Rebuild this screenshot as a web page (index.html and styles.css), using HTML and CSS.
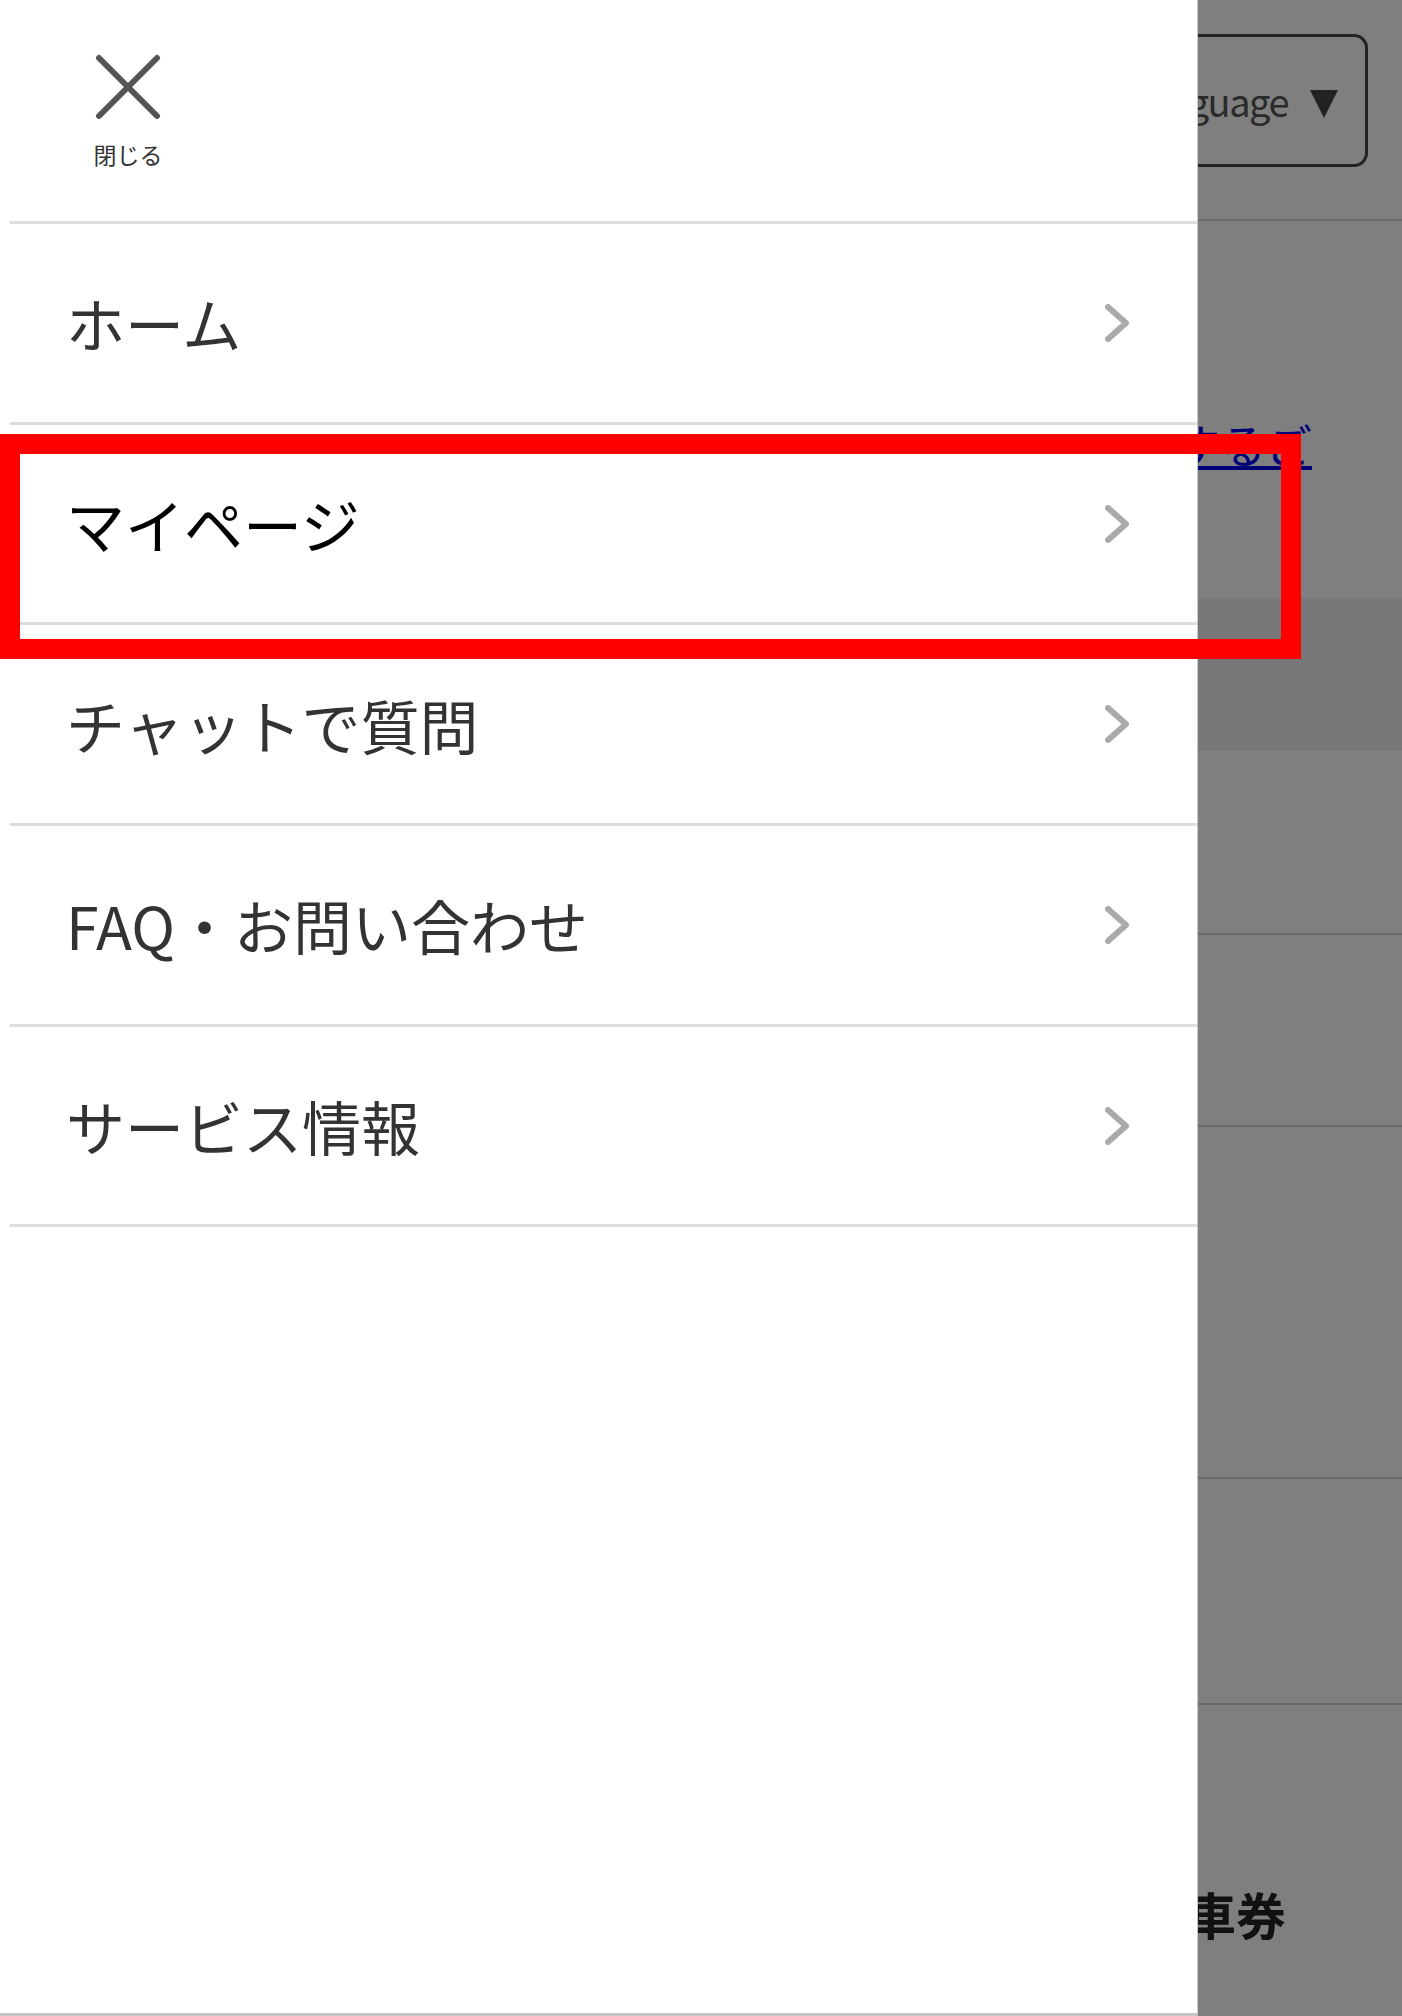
FILE: index.html
```html
<!DOCTYPE html>
<html lang="ja">
<head>
    <meta charset="UTF-8">
    <meta name="viewport" content="width=device-width, initial-scale=1.0">
    <title>メニュー</title>
    <link rel="stylesheet" href="styles.css">
</head>
<body>
    <div class="page">
        <header class="page-header">
            <div class="lang-select">
                <span class="lang-label">Language</span>
                <span class="lang-arrow"></span>
            </div>
        </header>
        <p class="notice"><a href="#">サービスのご利用方法はこちらをご確認するご</a></p>
        <div class="band"></div>
        <div class="block block-a"></div>
        <div class="block block-b"></div>
        <div class="block block-c"></div>
        <div class="block block-d"></div>
        <p class="ticket">乗車券</p>
    </div>

    <div class="overlay"></div>

    <nav class="drawer">
        <div class="drawer-head">
            <button class="close-btn" type="button">
                <svg width="66" height="66" viewBox="0 0 66 66">
                    <path d="M4 4 L62 62 M62 4 L4 62" stroke="#555" stroke-width="6" stroke-linecap="round" fill="none"/>
                </svg>
                <span class="close-label">閉じる</span>
            </button>
        </div>
        <ul class="menu">
            <li class="menu-item"><span>ホーム</span><svg class="chev" width="24" height="38" viewBox="0 0 24 38"><polyline points="3,3 21,19 3,35"/></svg></li>
            <li class="menu-item is-current"><span>マイページ</span><svg class="chev" width="24" height="38" viewBox="0 0 24 38"><polyline points="3,3 21,19 3,35"/></svg></li>
            <li class="menu-item"><span>チャットで質問</span><svg class="chev" width="24" height="38" viewBox="0 0 24 38"><polyline points="3,3 21,19 3,35"/></svg></li>
            <li class="menu-item"><span>FAQ・お問い合わせ</span><svg class="chev" width="24" height="38" viewBox="0 0 24 38"><polyline points="3,3 21,19 3,35"/></svg></li>
            <li class="menu-item"><span>サービス情報</span><svg class="chev" width="24" height="38" viewBox="0 0 24 38"><polyline points="3,3 21,19 3,35"/></svg></li>
        </ul>
    </nav>

    <div class="highlight"></div>
</body>
</html>
```

FILE: styles.css
```css
* {
    box-sizing: border-box;
}
body {
    margin: 0;
    font-family: 'Noto Sans CJK JP', 'Noto Sans', sans-serif;
    background: #fff;
    width: 1402px;
    height: 2016px;
    overflow: hidden;
    position: relative;
}

/* page behind the drawer */
.page {
    width: 1402px;
}
.page-header {
    height: 221px;
    border-bottom: 2px solid #d4d4d4;
    display: flex;
    justify-content: flex-end;
    padding: 34px 34px 0 0;
}
.lang-select {
    height: 133px;
    width: 420px;
    border: 3px solid #444;
    border-radius: 14px;
    display: flex;
    align-items: center;
    justify-content: flex-end;
    gap: 22px;
    padding: 0 27px 0 0;
    font-size: 38px;
    letter-spacing: -1.5px;
    color: #555;
}
.lang-arrow {
    width: 0;
    height: 0;
    border-left: 14px solid transparent;
    border-right: 14px solid transparent;
    border-top: 28px solid #444;
    margin-top: 6px;
}
.notice {
    margin: 194px 0 0;
    padding-right: 90px;
    text-align: right;
    font-size: 46px;
    line-height: 56px;
    white-space: nowrap;
}
.notice a {
    color: #0000ee;
}
.band {
    margin-top: 127px;
    height: 153px;
    background: #eee;
}
.block {
    border-bottom: 2px solid #d0d0d0;
}
.block-a { height: 184px; }
.block-b { height: 192px; }
.block-c { height: 352px; }
.block-d { height: 226px; }
.ticket {
    margin: 178px 0 0;
    padding-right: 116px;
    text-align: right;
    font-size: 50px;
    line-height: 60px;
    font-weight: 700;
    color: #222;
}

.overlay {
    position: absolute;
    inset: 0;
    background: rgba(0, 0, 0, 0.5);
}

/* drawer */
.drawer {
    position: absolute;
    top: 0;
    left: 0;
    width: 1187px;
    height: 2013px;
    padding-left: 10px;
    background: #fff;
    border-right: 1px solid #c8c8c8;
    border-bottom: 3px solid #c4c4c4;
    box-sizing: content-box;
}
.drawer-head {
    height: 224px;
    border-bottom: 3px solid #ddd;
    padding: 54px 0 0 85px;
}
.close-btn {
    display: flex;
    flex-direction: column;
    align-items: center;
    width: 66px;
    padding: 0;
    border: 0;
    background: none;
    font-family: inherit;
}
.close-btn svg {
    display: block;
}
.close-label {
    margin-top: 21px;
    font-size: 23px;
    line-height: 27px;
    color: #333;
    white-space: nowrap;
}
.menu {
    list-style: none;
    margin: 0;
    padding: 0;
}
.menu-item {
    height: 200.7px;
    border-bottom: 3px solid #ddd;
    display: flex;
    align-items: center;
    justify-content: space-between;
    padding: 0 68px 0 56px;
    font-size: 59px;
    color: #333;
}
.menu-item.is-current {
    color: #000;
}
.chev polyline {
    fill: none;
    stroke: #aaa;
    stroke-width: 6;
    stroke-linecap: round;
    stroke-linejoin: round;
}

/* annotation frame */
.highlight {
    position: absolute;
    left: 0;
    top: 434px;
    width: 1301px;
    height: 225px;
    border: 20px solid #f00;
}
```
